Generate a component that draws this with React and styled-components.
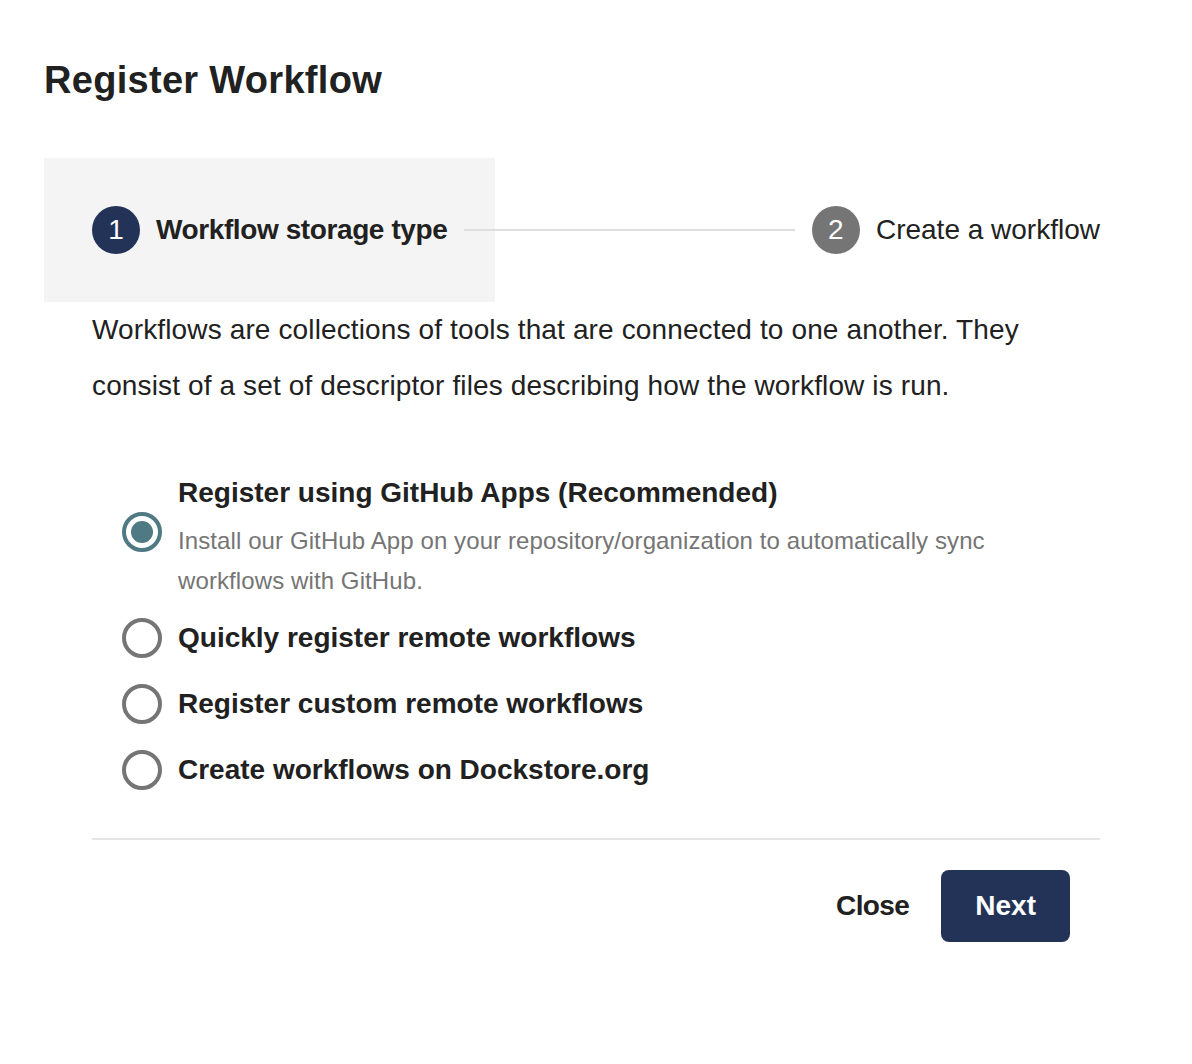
import { useState } from 'react'
import styled, { createGlobalStyle } from 'styled-components'

const GlobalStyle = createGlobalStyle`
    html, body {
        margin: 0;
        padding: 0;
        background: #ffffff;
    }
    body {
        font-family: "Liberation Sans", Arial, Helvetica, sans-serif;
        color: #212121;
    }
`;

const Dialog = styled.div`
    padding: 60px 44px;
`;

const Title = styled.h2`
    margin: 0 0 58px;
    font-size: 38px;
    line-height: 40px;
    font-weight: 700;
    letter-spacing: 0.3px;
    color: #212121;
`;

const StepperHeader = styled.div`
    display: flex;
    align-items: center;
    height: 144px;
`;

const StepHeader = styled.div`
    display: flex;
    align-items: center;
    gap: 16px;
    height: 100%;
    padding: 0 48px;
    background: ${({ active }) => (active ? '#f4f4f4' : 'transparent')};
`;

const StepIcon = styled.span`
    width: 48px;
    height: 48px;
    border-radius: 50%;
    display: flex;
    align-items: center;
    justify-content: center;
    flex-shrink: 0;
    background: ${({ active }) => (active ? '#233357' : '#757575')};
    color: #ffffff;
    font-size: 28px;
    line-height: 1;
`;

const StepLabel = styled.span`
    font-size: 28px;
    line-height: 40px;
    white-space: nowrap;
    color: #212121;
    font-weight: ${({ active }) => (active ? 700 : 400)};
    letter-spacing: ${({ active }) => (active ? '-0.4px' : '0')};
`;

const StepLine = styled.div`
    flex: 1;
    min-width: 32px;
    margin: 0 -31px;
    border-top: 2px solid #dedede;
`;

const Content = styled.div`
    padding: 0 48px;
`;

const Intro = styled.p`
    margin: 0;
    font-size: 28px;
    line-height: 56px;
    letter-spacing: 0.13px;
    color: #212121;
`;

const RadioGroup = styled.div`
    display: flex;
    flex-direction: column;
    margin-top: 52px;
    padding-left: 30px;
`;

const Option = styled.label`
    display: flex;
    align-items: center;
    gap: 16px;
    min-height: 66px;
    padding: ${({ tall }) => (tall ? '7px 0 4px' : '0')};
    box-sizing: border-box;
    cursor: pointer;
`;

const RadioCircle = styled.span`
    position: relative;
    width: 40px;
    height: 40px;
    box-sizing: border-box;
    border-radius: 50%;
    flex-shrink: 0;
    border: 4px solid ${({ checked }) => (checked ? '#4f7a83' : '#757575')};
    margin-top: ${({ tall }) => (tall ? '-10px' : '0')};

    &::after {
        content: '';
        position: absolute;
        top: 5px;
        left: 5px;
        width: 22px;
        height: 22px;
        border-radius: 50%;
        background: #4f7a83;
        display: ${({ checked }) => (checked ? 'block' : 'none')};
    }
`;

const OptionText = styled.div`
    display: flex;
    flex-direction: column;
    max-width: 850px;
`;

const OptionTitle = styled.span`
    font-size: 28px;
    line-height: 40px;
    font-weight: 700;
    color: #212121;
`;

const OptionDesc = styled.span`
    margin-top: 8px;
    font-size: 24px;
    line-height: 40px;
    letter-spacing: 0.1px;
    color: #757575;
`;

const Divider = styled.hr`
    margin: 35px 0 0;
    border: 0;
    border-top: 2px solid #e5e5e5;
`;

const Actions = styled.div`
    display: flex;
    justify-content: flex-end;
    margin-top: 30px;
    padding-right: 30px;
`;

const Button = styled.button`
    height: 72px;
    padding: 0 ${({ primary }) => (primary ? '34px' : '32px')};
    border: 0;
    border-radius: 8px;
    font-family: inherit;
    font-size: 28px;
    font-weight: 700;
    letter-spacing: ${({ primary }) => (primary ? '0' : '-0.6px')};
    background: ${({ primary }) => (primary ? '#233357' : 'transparent')};
    color: ${({ primary }) => (primary ? '#ffffff' : '#212121')};
    cursor: pointer;
`;

const options = [
    {
        id: 'github',
        title: 'Register using GitHub Apps (Recommended)',
        desc: 'Install our GitHub App on your repository/organization to automatically sync workflows with GitHub.',
    },
    { id: 'quick', title: 'Quickly register remote workflows' },
    { id: 'custom', title: 'Register custom remote workflows' },
    { id: 'create', title: 'Create workflows on Dockstore.org' },
]

const App = () => {
    const [selected, setSelected] = useState('github')

    return (
        <>
            <GlobalStyle />
            <Dialog>
                <Title>Register Workflow</Title>
                <StepperHeader>
                    <StepHeader active>
                        <StepIcon active>1</StepIcon>
                        <StepLabel active>Workflow storage type</StepLabel>
                    </StepHeader>
                    <StepLine />
                    <StepHeader>
                        <StepIcon>2</StepIcon>
                        <StepLabel>Create a workflow</StepLabel>
                    </StepHeader>
                </StepperHeader>
                <Content>
                    <Intro>
                        Workflows are collections of tools that are connected to one another. They
                        consist of a set of descriptor files describing how the workflow is run.
                    </Intro>
                    <RadioGroup role="radiogroup">
                        {options.map((opt) => (
                            <Option key={opt.id} tall={!!opt.desc} onClick={() => setSelected(opt.id)}>
                                <RadioCircle checked={selected === opt.id} tall={!!opt.desc} />
                                <OptionText>
                                    <OptionTitle>{opt.title}</OptionTitle>
                                    {opt.desc && <OptionDesc>{opt.desc}</OptionDesc>}
                                </OptionText>
                            </Option>
                        ))}
                    </RadioGroup>
                    <Divider />
                    <Actions>
                        <Button>Close</Button>
                        <Button primary>Next</Button>
                    </Actions>
                </Content>
            </Dialog>
        </>
    )
}

export default App
